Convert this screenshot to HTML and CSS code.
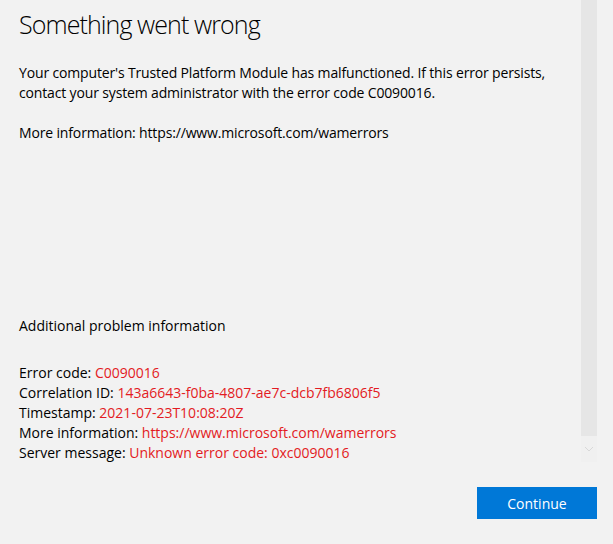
FILE: index.html
```
<!DOCTYPE html>
<html>
<head>
<meta charset="utf-8">
<link rel="stylesheet" href="styles.css">
</head>
<body>
<div class="page">
  <div class="content">
    <h1 class="title">Something went wrong</h1>
    <p class="para">Your computer's Trusted Platform Module has malfunctioned. If this error persists, contact your system administrator with the error code C0090016.</p>
    <p class="para">More information: https://www.microsoft.com/wamerrors</p>
    <div class="spacer"></div>
    <p class="para add">Additional problem information</p>
    <div class="details">
      <div>Error code: <span class="red">C0090016</span></div>
      <div>Correlation ID: <span class="red">143a6643-f0ba-4807-ae7c-dcb7fb6806f5</span></div>
      <div>Timestamp: <span class="red">2021-07-23T10:08:20Z</span></div>
      <div>More information: <span class="red">https://www.microsoft.com/wamerrors</span></div>
      <div>Server message: <span class="red">Unknown error code: 0xc0090016</span></div>
    </div>
  </div>
  <div class="scrollbar">
    <div class="track"></div>
    <div class="arrow">
      <svg width="10" height="6" viewBox="0 0 10 6"><path d="M1 1 L5 5 L9 1" fill="none" stroke="#d8d8d8" stroke-width="1"/></svg>
    </div>
  </div>
</div>
<div class="footer">
  <button class="btn">Continue</button>
</div>
</body>
</html>
```
FILE: styles.css
```
html, body {
  margin: 0;
  padding: 0;
  background: #f2f2f2;
  width: 613px;
  height: 544px;
  overflow: hidden;
  font-family: "Open Sans", "Noto Sans", sans-serif;
  color: #000;
}
.page {
  display: flex;
  height: 462px;
}
.content {
  width: 562px;
  padding-left: 19px;
  font-size: 14px;
  line-height: 20px;
}
.title {
  margin: 0;
  padding-top: 8px;
  font-size: 25px;
  font-weight: 300;
  letter-spacing: -0.9px;
  line-height: 32px;
  height: 32px;
}
.para {
  margin: 23px 0 0 0;
  letter-spacing: -0.15px;
}
.para + .para {
  margin-top: 20px;
}
.spacer {
  height: 153px;
}
.para.add {
  margin-top: 20px;
  letter-spacing: 0;
}
.details {
  margin-top: 27px;
}
.red {
  color: #e31b23;
}
.scrollbar {
  width: 16px;
  display: flex;
  flex-direction: column;
}
.track {
  height: 436px;
  background: #e6e6e6;
}
.arrow {
  height: 26px;
  background: #f0f0f0;
  display: flex;
  align-items: center;
  justify-content: center;
}
.footer {
  display: flex;
  justify-content: flex-end;
  padding: 25px 16px 0 0;
}
.btn {
  width: 120px;
  height: 32px;
  border: none;
  background: #0078d7;
  color: #fff;
  font-family: "Open Sans", "Noto Sans", sans-serif;
  font-size: 14px;
  padding: 0;
}
```
